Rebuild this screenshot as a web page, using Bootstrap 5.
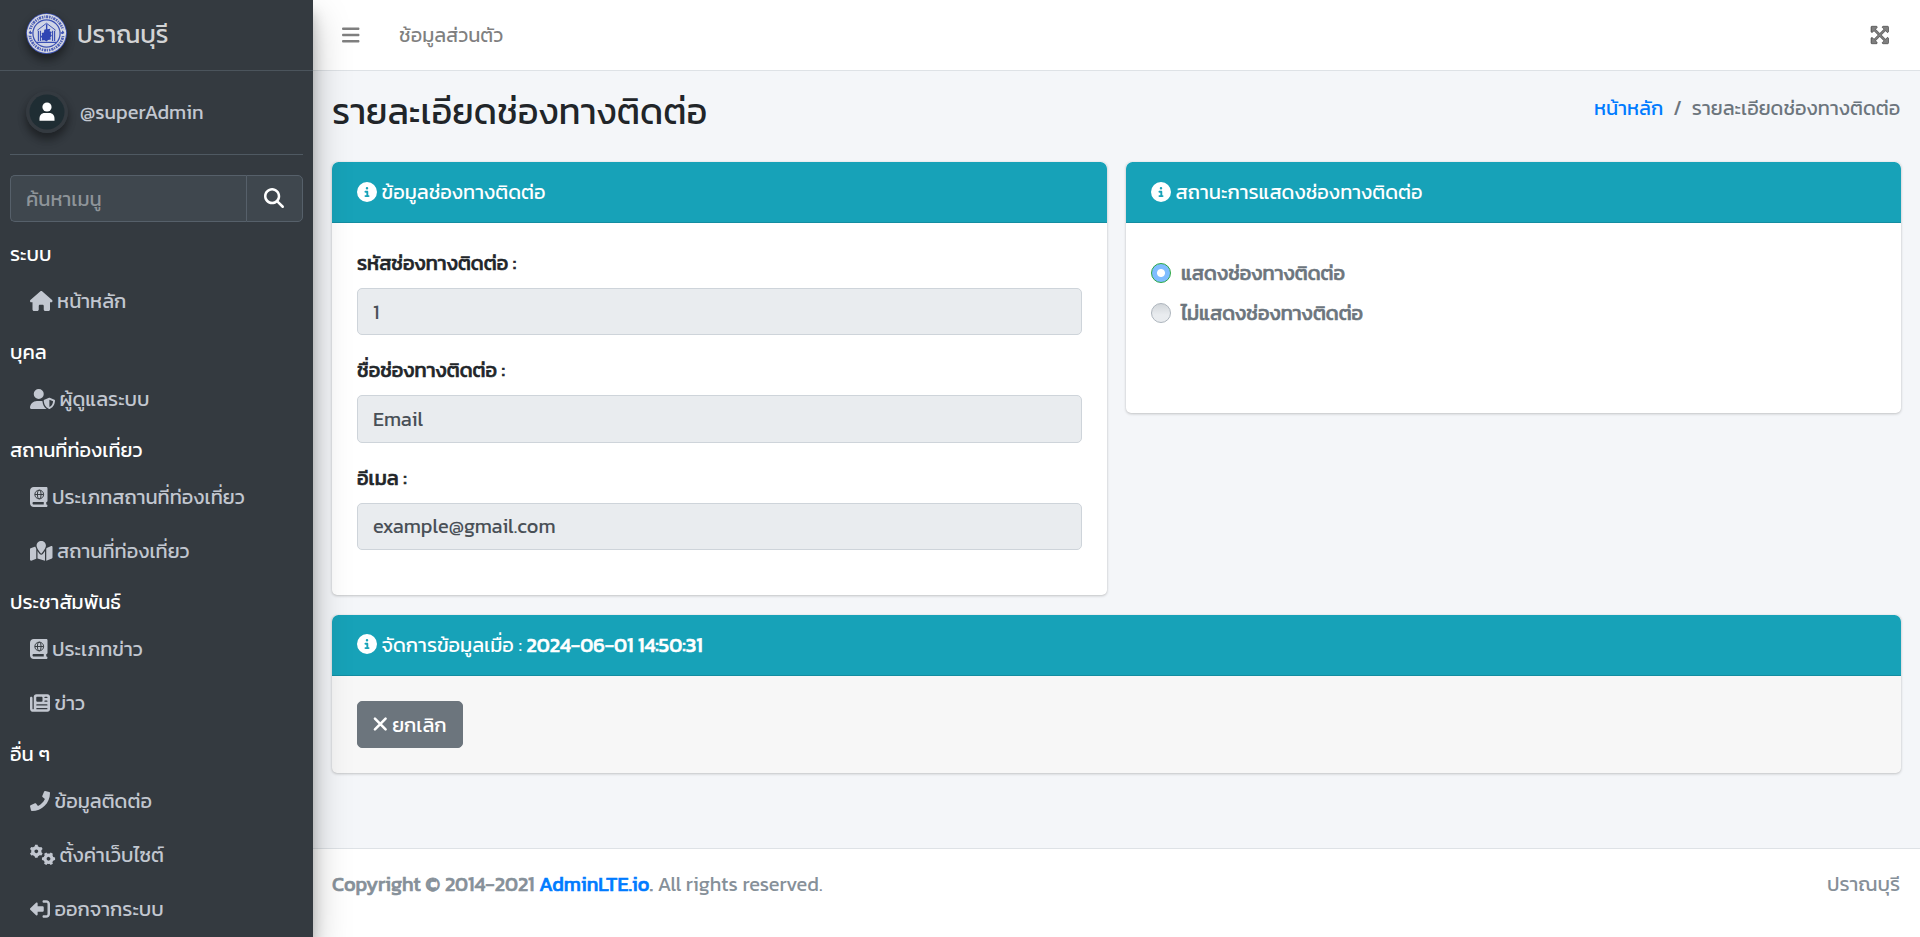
<!DOCTYPE html>
<html lang="th">
<head>
<meta charset="utf-8">
<meta name="viewport" content="width=device-width, initial-scale=1">
<title>รายละเอียดช่องทางติดต่อ</title>
<link href="https://cdn.jsdelivr.net/npm/bootstrap@5.3.0/dist/css/bootstrap.min.css" rel="stylesheet">
<style>
  html { font-size: 20px; }
  body { font-family: Kanit, "Noto Sans Thai", "Noto Sans", sans-serif; font-weight: 400; line-height: 1.5; color: #212529; background: #f4f6f9; height: 937px; overflow: hidden; }
  a { text-decoration: none; color: #007bff; }
  .ico { height: 1em; width: auto; fill: currentColor; vertical-align: -.125em; overflow: visible; }
  .heavy, .foot strong, .card-header strong { font-weight: 400; -webkit-text-stroke: .7px currentColor; }

  .side { width: 312.5px; background: #343a40; color: #c2c7d0; z-index: 5; box-shadow: 0 17.5px 35px rgba(0,0,0,.25), 0 12.5px 12.5px rgba(0,0,0,.22); }
  .brand { height: 71px; border-bottom: 1px solid #4b545c; font-size: 25px; padding: 0 10px 0 26px; color: rgba(255,255,255,.8); }
  .brand svg, .panel svg { border-radius: 50%; box-shadow: 0 4px 8px rgba(0,0,0,.3), 0 8px 8px rgba(0,0,0,.2); flex: none; }
  .brand svg { width: 41px; height: 41px; margin-top: -4px; }
  .panel { padding: 0 0 21px 16px; border-bottom: 1px solid #4f5962; color: #c2c7d0; }
  .panel span { padding-left: 12px; }
  .finder .form-control, .finder .btn { background: #3f474e; border: 1px solid #56606a; height: 47px; border-radius: 5px; color: #fff; box-shadow: none; }
  .finder .form-control { padding: 7.5px 15px; border-top-right-radius: 0; border-bottom-right-radius: 0; border-right: 0; }
  .finder .form-control::placeholder { color: #8e9499; opacity: 1; }
  .finder .btn { flex: 0 0 57px; border-top-left-radius: 0; border-bottom-left-radius: 0; padding: 0; }
  .menu { padding-top: 10px; }
  .side-head { height: 44px; line-height: 30px; padding-top: 7px; color: #fff; }
  .side-link { display: block; height: 50px; margin-bottom: 4px; padding: 10px 20px; color: #c2c7d0; white-space: nowrap; }

  .topbar { height: 71px; background: #fff; border-bottom: 1px solid #dee2e6; color: rgba(0,0,0,.5); padding: 0 32px 0 29px; }
  .content-area { padding: 0 18.75px 0 19.5px; }
  .page-top { height: 91px; padding-top: 19px; }
  .page-title { font-size: 36px; font-weight: 400; line-height: 1.2; }
  .breadcrumb { --bs-breadcrumb-item-padding-x: 10px; --bs-breadcrumb-divider-color: #6c757d; --bs-breadcrumb-item-active-color: #6c757d; margin: 0; padding: 3px 1px 0 0; }
  .panel-card { border: 0; border-radius: 5px; box-shadow: 0 0 1px rgba(0,0,0,.125), 0 1px 3px rgba(0,0,0,.2); overflow: hidden; }
  .panel-card .card-header { background: #17a2b8; color: #fff; padding: 15px 25px; border-bottom: 1px solid rgba(0,0,0,.125); height: 61px; }
  .panel-card .card-body { padding: 25px; }
  .panel-card .form-label { margin-bottom: 10px; display: block; line-height: 30px; }
  .panel-card .form-control { height: 47.3px; padding: 7px 15px; border: 1px solid #ced4da; border-radius: 5px; background: #e9ecef; color: #495057; margin-bottom: 20.1px; }
  .status-card { height: 251px; }
  .panel-card.status-card .card-body { padding-top: 35px; }
  .manage-card { margin-top: 19.6px; height: 158px; background: #f7f7f7; }
  .gutter { --bs-gutter-x: 18.75px; }
  .choice { color: #6c757d; height: 30px; margin-bottom: 10px; }
  .dot { width: 20px; height: 20px; border-radius: 50%; border: 1px solid #adb5bd; background: linear-gradient(#d2d6da, #e9ecef 60%); flex: none; margin-right: 10px; }
  .dot.on { border-color: #28a745; background: radial-gradient(circle, #fff 3.5px, #80bdff 4.5px); }
  .btn-cancel { background: #6c757d; color: #fff; height: 47px; padding: 8px 15px 7px; border: 1px solid #6c757d; border-radius: 5px; line-height: 30px; }
  .btn-cancel:hover { background: #5a6268; color: #fff; }
  .foot { border-top: 1px solid #dee2e6; background: #fff; color: #869099; padding: 20px 20px 20px 19.5px; height: 89px; }
</style>
</head>
<body class="d-flex">

<aside class="side flex-shrink-0 h-100 position-relative">
  <a class="brand d-flex align-items-center" href="#">
    <svg viewBox="0 0 38 38">
      <circle cx="19" cy="19" r="19" fill="#3c51b4"/>
      <circle cx="19" cy="19" r="18" fill="#dadce2"/>
      <circle cx="19" cy="19" r="15.500" fill="none" stroke="#5062b8" stroke-width="2.600" stroke-dasharray="1.300 .8 .9 .6 1.900 .7" pathLength="88"/>
      <g fill="#dadce2"><circle cx="4" cy="18" r="3.200"/><circle cx="34" cy="18" r="3.200"/></g>
      <path d="M2.400 18.500l1.600-2.500.8 1.600 1.400.6-1.700 1.400M35.600 18.500l-1.600-2.500-.8 1.600-1.400.6 1.700 1.400" fill="#3c51b4"/>
      <circle cx="19" cy="19" r="12.600" fill="#cfd4e6" stroke="#3c51b4" stroke-width="1.200"/>
      <path d="M10.500 16L19 9.500l8.500 6.500" fill="none" stroke="#3c51b4" stroke-width=".9"/>
      <path d="M11.500 26V16.500M13.400 26V16.500M24.600 26V16.500M26.500 26V16.500M9.500 27.300h19" fill="none" stroke="#3c51b4" stroke-width="1.100"/>
      <path d="M18.500 10.500h1.300v4.500l2.700-.5-.6 2.500 2 .5-1 2 1.100 1.500-1.400 1.500.4 2-2.500.5-1.500 1.500-2-1.300-2.400.3.300-2.300-1.400-1.200 1.500-1.500-.5-2 2.200-.5.200-2.500 1.600-.5z" fill="#2f45b3"/>
    </svg>
    <span class="ms-2">ปราณบุรี</span>
  </a>
  <div class="px-2">
    <div class="panel d-flex align-items-center mt-3">
      <svg width="42" height="42" viewBox="0 0 42 42">
        <circle cx="21" cy="21" r="21" fill="#343a40"/><circle cx="21" cy="21" r="17.500" fill="#1f2d33"/>
        <circle cx="21" cy="16" r="4.600" fill="#fff"/>
        <path d="M13.500 29.800v-2.300c0-3.400 2.300-5.500 5-5.500h5c2.700 0 5 2.100 5 5.500v2.300z" fill="#fff"/>
      </svg>
      <span>@superAdmin</span>
    </div>
    <div class="finder d-flex mt-3">
      <input class="form-control" type="search" placeholder="ค้นหาเมนู">
      <button class="btn">
        <svg class="ico" viewBox="0 0 512 512"><path d="M416 208c0 45.900-14.900 88.300-40 122.700L502.600 457.400c12.500 12.500 12.500 32.800 0 45.300s-32.800 12.500-45.300 0L330.700 376c-34.400 25.200-76.800 40-122.700 40C93.100 416 0 322.900 0 208S93.100 0 208 0S416 93.100 416 208zM208 352a144 144 0 1 0 0-288 144 144 0 1 0 0 288z"/></svg>
      </button>
    </div>
    <nav class="menu">
      <div class="side-head">ระบบ</div>
      <a class="side-link" href="#"><svg class="ico" viewBox="0 0 576 512"><path d="M575.800 255.500c0 18-15 32.100-32 32.100h-32l.7 160.200c0 2.700-.2 5.400-.5 8.100V472c0 22.100-17.900 40-40 40H392c-22.100 0-40-17.900-40-40v-88c0-17.700-14.300-32-32-32H256c-17.700 0-32 14.300-32 32v88c0 22.100-17.900 40-40 40H104c-22.100 0-40-17.900-40-40V287.600H32c-18 0-32-14-32-32.100 0-9 3-17 10-24L266.400 8c7-7 15-8 22-8s15 2 21 7L564.800 231.500c8 7 12 15 11 24z"/></svg> หน้าหลัก</a>
      <div class="side-head">บุคล</div>
      <a class="side-link" href="#"><svg class="ico" viewBox="0 0 640 512"><path d="M224 256A128 128 0 1 0 224 0a128 128 0 1 0 0 256zm-45.700 48C79.800 304 0 383.800 0 482.300C0 498.700 13.300 512 29.700 512H418.300c1.800 0 3.500-.2 5.300-.5c-76.300-55.100-99.800-141-103.100-200.200c-16.100-4.800-33.100-7.300-50.700-7.300H178.300zm308.800-78.300l-120 48C358 277.400 352 286.200 352 296c0 63.300 25.900 168.800 134.800 214.200c5.900 2.500 12.600 2.500 18.500 0C614.100 464.800 640 359.300 640 296c0-9.800-6-18.600-15.100-22.300l-120-48c-5.700-2.300-12.100-2.300-17.800 0zM591.400 312c-3.900 50.700-27.200 116.700-95.400 149.700V273.800L591.400 312z"/></svg> ผู้ดูแลระบบ</a>
      <div class="side-head">สถานที่ท่องเที่ยว</div>
      <a class="side-link" href="#"><svg class="ico" viewBox="0 0 448 512"><path d="M0 96C0 43 43 0 96 0H416c17.700 0 32 14.300 32 32V352c0 17.700-14.300 32-32 32v64c17.700 0 32 14.300 32 32s-14.300 32-32 32H96c-53 0-96-43-96-96V96zM64 416c0 17.700 14.300 32 32 32H352V384H96c-17.700 0-32 14.300-32 32z"/><g fill="none" stroke="#343a40" stroke-width="25"><circle cx="236" cy="192" r="112"/><ellipse cx="236" cy="192" rx="48" ry="112"/><path d="M124 192H348"/></g></svg> ประเภทสถานที่ท่องเที่ยว</a>
      <a class="side-link" href="#"><svg class="ico" viewBox="0 0 576 512"><path d="M408 120c0 54.600-73.100 151.900-105.200 192c-7.700 9.600-22 9.600-29.600 0C241.100 271.900 168 174.600 168 120C168 53.700 221.700 0 288 0s120 53.700 120 120zm8 80.400c3.500-6.900 6.700-13.800 9.600-20.600c.5-1.200 1-2.500 1.500-3.700l116-46.400C558.900 123.400 576 135 576 152V422.800c0 9.800-6 18.600-15.100 22.300L416 503V200.400zM137.600 138.300c2.400 14.100 7.200 28.300 12.800 41.500c2.900 6.800 6.100 13.700 9.600 20.600V451.800L32.900 502.700C17.100 509 0 497.400 0 480.400V209.600c0-9.800 6-18.600 15.100-22.300l122.600-49zM327.800 332c13.900-17.400 35.700-45.700 56.200-77V504.300L192 449.400V255c20.500 31.300 42.300 59.600 56.200 77c20.500 25.600 59.100 25.600 79.600 0z"/></svg> สถานที่ท่องเที่ยว</a>
      <div class="side-head">ประชาสัมพันธ์</div>
      <a class="side-link" href="#"><svg class="ico" viewBox="0 0 448 512"><path d="M0 96C0 43 43 0 96 0H416c17.700 0 32 14.300 32 32V352c0 17.700-14.300 32-32 32v64c17.700 0 32 14.300 32 32s-14.300 32-32 32H96c-53 0-96-43-96-96V96zM64 416c0 17.700 14.300 32 32 32H352V384H96c-17.700 0-32 14.300-32 32z"/><g fill="none" stroke="#343a40" stroke-width="25"><circle cx="236" cy="192" r="112"/><ellipse cx="236" cy="192" rx="48" ry="112"/><path d="M124 192H348"/></g></svg> ประเภทข่าว</a>
      <a class="side-link" href="#"><svg class="ico" viewBox="0 0 512 512"><path fill-rule="evenodd" d="M96 96c0-35.300 28.700-64 64-64H448c35.300 0 64 28.700 64 64V416c0 35.300-28.700 64-64 64H80c-44.200 0-80-35.800-80-80V128c0-17.700 14.300-32 32-32s32 14.300 32 32V400c0 8.800 7.200 16 16 16s16-7.200 16-16V96zm64 24v80c0 13.300 10.700 24 24 24H296c13.300 0 24-10.700 24-24V120c0-13.300-10.700-24-24-24H184c-13.300 0-24 10.700-24 24zM384 96a16 16 0 0 0 0 32h48a16 16 0 0 0 0-32zM384 192a16 16 0 0 0 0 32h48a16 16 0 0 0 0-32zM176 288a16 16 0 0 0 0 32h256a16 16 0 0 0 0-32zM176 384a16 16 0 0 0 0 32h256a16 16 0 0 0 0-32z"/></svg> ข่าว</a>
      <div class="side-head">อื่น ๆ</div>
      <a class="side-link" href="#"><svg class="ico" viewBox="0 0 512 512"><path d="M493.400 24.600l-104-24c-11.300-2.600-22.900 3.300-27.500 13.900l-48 112c-4.200 9.800-1.400 21.300 6.900 28l60.600 49.600c-36 76.700-98.900 140.500-177.200 177.200l-49.600-60.600c-6.800-8.300-18.200-11.100-28-6.900l-112 48C3.900 366.500-2 378.100.6 389.400l24 104C27.100 504.200 36.700 512 48 512c256.100 0 464-207.500 464-464 0-11.200-7.700-20.900-18.600-23.400z"/></svg> ข้อมูลติดต่อ</a>
      <a class="side-link" href="#"><svg class="ico" viewBox="0 0 640 512"><defs><g id="cog"><circle r="90" fill="none" stroke="currentColor" stroke-width="84"/><path id="tooth" d="M-44-115L-32-168H32L44-115z"/><use href="#tooth" transform="rotate(60)"/><use href="#tooth" transform="rotate(120)"/><use href="#tooth" transform="rotate(180)"/><use href="#tooth" transform="rotate(240)"/><use href="#tooth" transform="rotate(300)"/></g></defs><use href="#cog" x="162" y="160"/><use href="#cog" transform="translate(474 352) rotate(30)"/></svg> ตั้งค่าเว็บไซต์</a>
      <a class="side-link" href="#"><svg class="ico" viewBox="0 0 512 512"><path d="M352 96h64c17.700 0 32 14.300 32 32V384c0 17.700-14.300 32-32 32H352c-17.700 0-32 14.300-32 32s14.300 32 32 32h64c53 0 96-43 96-96V128c0-53-43-96-96-96H352c-17.700 0-32 14.300-32 32s14.300 32 32 32zM7.500 238.100C2.700 242.800 0 249.300 0 256s2.700 13.200 7.500 17.900l147 139.500c4.500 4.300 10.500 6.700 16.700 6.700 13.400 0 24.300-10.900 24.300-24.300V328H320c17.700 0 32-14.300 32-32V216c0-17.700-14.300-32-32-32H195.500V116.300C195.500 102.900 184.600 92 171.200 92c-6.200 0-12.200 2.400-16.700 6.700z"/></svg> ออกจากระบบ</a>
    </nav>
  </div>
</aside>

<div class="d-flex flex-column flex-grow-1 h-100">
  <nav class="topbar d-flex align-items-center flex-shrink-0">
    <a class="text-reset" href="#"><svg class="ico" viewBox="0 0 448 512"><path d="M0 96C0 78.300 14.300 64 32 64H416c17.700 0 32 14.300 32 32s-14.300 32-32 32H32C14.300 128 0 113.700 0 96zM0 256c0-17.700 14.300-32 32-32H416c17.700 0 32 14.300 32 32s-14.300 32-32 32H32c-17.700 0-32-14.300-32-32zM448 416c0 17.700-14.300 32-32 32H32c-17.700 0-32-14.300-32-32s14.300-32 32-32H416c17.700 0 32 14.300 32 32z"/></svg></a>
    <a class="text-reset ms-4 ps-2" href="#">ช้อมูลส่วนตัว</a>
    <a class="text-reset ms-auto" href="#"><svg class="ico" viewBox="0 0 448 512" stroke="currentColor" stroke-width="22"><path d="M448 344v112a23.940 23.940 0 0 1-24 24H312c-21.390 0-32.090-25.900-17-41l36.200-36.200L224 295.600 116.770 402.900 153 439c15.090 15.100 4.390 41-17 41H24a23.940 23.940 0 0 1-24-24V344c0-21.400 25.890-32.100 41-17l36.190 36.200L184.460 256 77.180 148.700 41 185c-15.100 15.100-41 4.400-41-17V56a23.940 23.940 0 0 1 24-24h112c21.390 0 32.090 25.900 17 41l-36.200 36.200L224 216.400l107.230-107.300L295 73c-15.090-15.100-4.390-41 17-41h112a23.940 23.940 0 0 1 24 24v112c0 21.400-25.890 32.100-41 17l-36.190-36.200L263.540 256l107.280 107.300L407 327.100c15.100-15.200 41-4.500 41 16.900z"/></svg></a>
  </nav>

  <main class="content-area flex-grow-1">
    <div class="page-top d-flex justify-content-between align-items-start">
      <h1 class="page-title m-0">รายละเอียดช่องทางติดต่อ</h1>
      <ol class="breadcrumb">
        <li class="breadcrumb-item"><a href="#">หน้าหลัก</a></li>
        <li class="breadcrumb-item active">รายละเอียดช่องทางติดต่อ</li>
      </ol>
    </div>

    <div class="row gutter align-items-start">
      <div class="col-6">
        <div class="card panel-card">
          <div class="card-header"><svg class="ico" viewBox="0 0 512 512"><path d="M256 512A256 256 0 1 0 256 0a256 256 0 1 0 0 512zM216 336h24V272H216c-13.300 0-24-10.700-24-24s10.700-24 24-24h48c13.300 0 24 10.700 24 24v88h8c13.300 0 24 10.700 24 24s-10.700 24-24 24H216c-13.300 0-24-10.700-24-24s10.700-24 24-24zm40-208a32 32 0 1 1 0 64 32 32 0 1 1 0-64z"/></svg> ข้อมูลช่องทางติดต่อ</div>
          <div class="card-body">
            <label class="form-label heavy">รหัสช่องทางติดต่อ :</label>
            <input class="form-control" value="1" readonly>
            <label class="form-label heavy">ชื่อช่องทางติดต่อ :</label>
            <input class="form-control" value="Email" readonly>
            <label class="form-label heavy">อีเมล :</label>
            <input class="form-control" value="example@gmail.com" readonly>
          </div>
        </div>
      </div>
      <div class="col-6">
        <div class="card panel-card status-card">
          <div class="card-header"><svg class="ico" viewBox="0 0 512 512"><path d="M256 512A256 256 0 1 0 256 0a256 256 0 1 0 0 512zM216 336h24V272H216c-13.300 0-24-10.700-24-24s10.700-24 24-24h48c13.300 0 24 10.700 24 24v88h8c13.300 0 24 10.700 24 24s-10.700 24-24 24H216c-13.300 0-24-10.700-24-24s10.700-24 24-24zm40-208a32 32 0 1 1 0 64 32 32 0 1 1 0-64z"/></svg> สถานะการแสดงช่องทางติดต่อ</div>
          <div class="card-body">
            <div class="choice heavy d-flex align-items-center"><span class="dot on"></span>แสดงช่องทางติดต่อ</div>
            <div class="choice heavy d-flex align-items-center"><span class="dot"></span>ไม่แสดงช่องทางติดต่อ</div>
          </div>
        </div>
      </div>
    </div>

    <div class="card panel-card manage-card">
      <div class="card-header"><svg class="ico" viewBox="0 0 512 512"><path d="M256 512A256 256 0 1 0 256 0a256 256 0 1 0 0 512zM216 336h24V272H216c-13.300 0-24-10.700-24-24s10.700-24 24-24h48c13.300 0 24 10.700 24 24v88h8c13.300 0 24 10.700 24 24s-10.700 24-24 24H216c-13.300 0-24-10.700-24-24s10.700-24 24-24zm40-208a32 32 0 1 1 0 64 32 32 0 1 1 0-64z"/></svg> จัดการข้อมูลเมื่อ : <strong>2024-06-01 14:50:31</strong></div>
      <div class="card-body">
        <button class="btn btn-cancel"><svg class="ico" viewBox="0 0 372 512"><path d="M50 120L322 392M322 120L50 392" fill="none" stroke="currentColor" stroke-width="66" stroke-linecap="round"/></svg> ยกเลิก</button>
      </div>
    </div>
  </main>

  <footer class="foot d-flex justify-content-between flex-shrink-0">
    <div><strong>Copyright © 2014-2021 <a href="#">AdminLTE.io</a>.</strong> All rights reserved.</div>
    <div>ปราณบุรี</div>
  </footer>
</div>

<script src="https://cdn.jsdelivr.net/npm/bootstrap@5.3.0/dist/js/bootstrap.bundle.min.js"></script>
</body>
</html>
